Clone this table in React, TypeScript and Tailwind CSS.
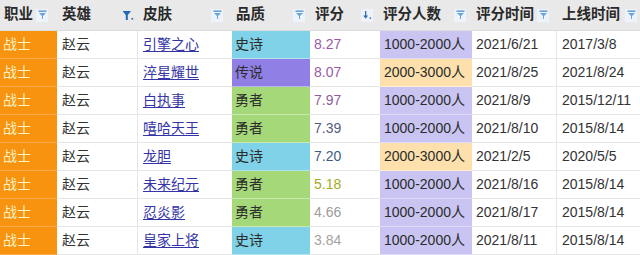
import React from "react";

type Row = {
  skin: string;
  quality: "史诗" | "传说" | "勇者";
  score: string;
  scoreColor: string;
  count: string;
  date: string;
  online: string;
};

const rows: Row[] = [
  { skin: "引擎之心", quality: "史诗", score: "8.27", scoreColor: "text-[#9a5aa6]", count: "1000-2000人", date: "2021/6/21", online: "2017/3/8" },
  { skin: "淬星耀世", quality: "传说", score: "8.07", scoreColor: "text-[#9a5aa6]", count: "2000-3000人", date: "2021/8/25", online: "2021/8/24" },
  { skin: "白执事", quality: "勇者", score: "7.97", scoreColor: "text-[#905c9e]", count: "1000-2000人", date: "2021/8/9", online: "2015/12/11" },
  { skin: "嘻哈天王", quality: "勇者", score: "7.39", scoreColor: "text-[#545e80]", count: "1000-2000人", date: "2021/8/10", online: "2015/8/14" },
  { skin: "龙胆", quality: "史诗", score: "7.20", scoreColor: "text-[#3e5c82]", count: "2000-3000人", date: "2021/2/5", online: "2020/5/5" },
  { skin: "未来纪元", quality: "勇者", score: "5.18", scoreColor: "text-[#a3ab1c]", count: "1000-2000人", date: "2021/8/16", online: "2015/8/14" },
  { skin: "忍炎影", quality: "勇者", score: "4.66", scoreColor: "text-[#9c9c9c]", count: "1000-2000人", date: "2021/8/17", online: "2015/8/14" },
  { skin: "皇家上将", quality: "史诗", score: "3.84", scoreColor: "text-[#a3a3a3]", count: "1000-2000人", date: "2021/8/11", online: "2015/8/14" },
];

const qualityBg: Record<string, string> = {
  史诗: "bg-[#7fd2e7]",
  传说: "bg-[#9080e6]",
  勇者: "bg-[#a5d879]",
};

function FilterIcon() {
  return (
    <span className="flex h-[13px] w-[12px] shrink-0 items-center justify-center bg-[#eef3f9]">
      <svg width="9" height="10" viewBox="0 0 9 10">
        <rect x="0.5" y="0.5" width="8" height="1.3" fill="#4a8fd4" />
        <path d="M1 3 L8 3 L5 6 L5 9 L4 9 L4 6 Z" fill="#6aa6de" />
      </svg>
    </span>
  );
}

function ActiveFilterIcon() {
  return (
    <span className="flex h-[13px] w-[12px] shrink-0 items-center justify-center">
      <svg width="12" height="11" viewBox="0 0 12 11">
        <path d="M0.5 1 L9 1 L5.8 5 L5.8 10 L3.8 10 L3.8 5 Z" fill="#2467b8" />
        <rect x="9.5" y="8" width="1.6" height="1.6" fill="#2467b8" />
      </svg>
    </span>
  );
}

function SortIcon() {
  return (
    <span className="flex h-[13px] w-[12px] shrink-0 items-center justify-center bg-[#eef3f9]">
      <svg width="10" height="10" viewBox="0 0 10 10">
        <rect x="3" y="1" width="1.3" height="6" fill="#2f6fb8" />
        <path d="M1.2 5.5 L6.1 5.5 L3.65 8.8 Z" fill="#2f6fb8" />
        <rect x="7.6" y="7.4" width="1.5" height="1.5" fill="#2f6fb8" />
      </svg>
    </span>
  );
}

const headers: { label: string; icon: "f" | "a" | "s"; pl: string; pr: string }[] = [
  { label: "职业", icon: "f", pl: "pl-[4px]", pr: "pr-[9px]" },
  { label: "英雄", icon: "a", pl: "pl-[5px]", pr: "pr-[4px]" },
  { label: "皮肤", icon: "f", pl: "pl-[5px]", pr: "pr-[9px]" },
  { label: "品质", icon: "f", pl: "pl-[4px]", pr: "pr-[5px]" },
  { label: "评分", icon: "s", pl: "pl-[5px]", pr: "pr-[7px]" },
  { label: "评分人数", icon: "f", pl: "pl-[3px]", pr: "pr-[6px]" },
  { label: "评分时间", icon: "f", pl: "pl-[4px]", pr: "pr-[8px]" },
  { label: "上线时间", icon: "f", pl: "pl-[5px]", pr: "pr-[3px]" },
];

const grid = "grid grid-cols-[57px_81px_94px_78px_70px_92px_85px_83px]";

export default function App() {
  return (
    <div
      className="w-[640px] h-[255px] overflow-hidden bg-white text-[14px] text-[#333]"
      style={{ fontFamily: '"Liberation Sans", "Noto Sans CJK SC", sans-serif' }}
    >
      <div className={`${grid} h-[31px] bg-[#e9e9e9] border-b border-[#dcdcdc]`}>
        {headers.map((h, i) => (
          <div
            key={i}
            className={`flex items-center justify-between whitespace-nowrap ${h.pl} ${h.pr} text-[14.5px] font-bold text-[#2a2a2a]`}
          >
            <span>{h.label}</span>
            {h.icon === "f" ? <FilterIcon /> : h.icon === "a" ? <ActiveFilterIcon /> : <SortIcon />}
          </div>
        ))}
      </div>
      {rows.map((r, i) => (
        <div key={i} className={`${grid} h-[28px]`}>
          <div className="flex items-center pl-[3px] bg-[#f7930f] border-b border-[#f9aa4a] text-[#fdf0c2]">
            战士
          </div>
          <div className="flex items-center pl-[5px] border-b border-r border-[#e6e6e6]">
            赵云
          </div>
          <div className="flex items-center pl-[5px] border-b border-[#e6e6e6]">
            <span className="text-[#3434a6] underline underline-offset-2">{r.skin}</span>
          </div>
          <div
            className={`flex items-center pl-[3px] border-b border-white/40 ${qualityBg[r.quality]} text-[#2c2c2c]`}
          >
            {r.quality}
          </div>
          <div className={`flex items-center pl-[4px] border-b border-[#e6e6e6] ${r.scoreColor}`}>
            {r.score}
          </div>
          <div
            className={`flex items-center pl-[4px] border-b border-white/40 text-[#2c2c2c] ${
              r.count.startsWith("1000") ? "bg-[#c9c4f1]" : "bg-[#fde0ab]"
            }`}
          >
            {r.count}
          </div>
          <div className="flex items-center pl-[4px] border-b border-r border-[#e6e6e6]">
            {r.date}
          </div>
          <div className="flex items-center pl-[5px] border-b border-[#e6e6e6]">
            {r.online}
          </div>
        </div>
      ))}
    </div>
  );
}
